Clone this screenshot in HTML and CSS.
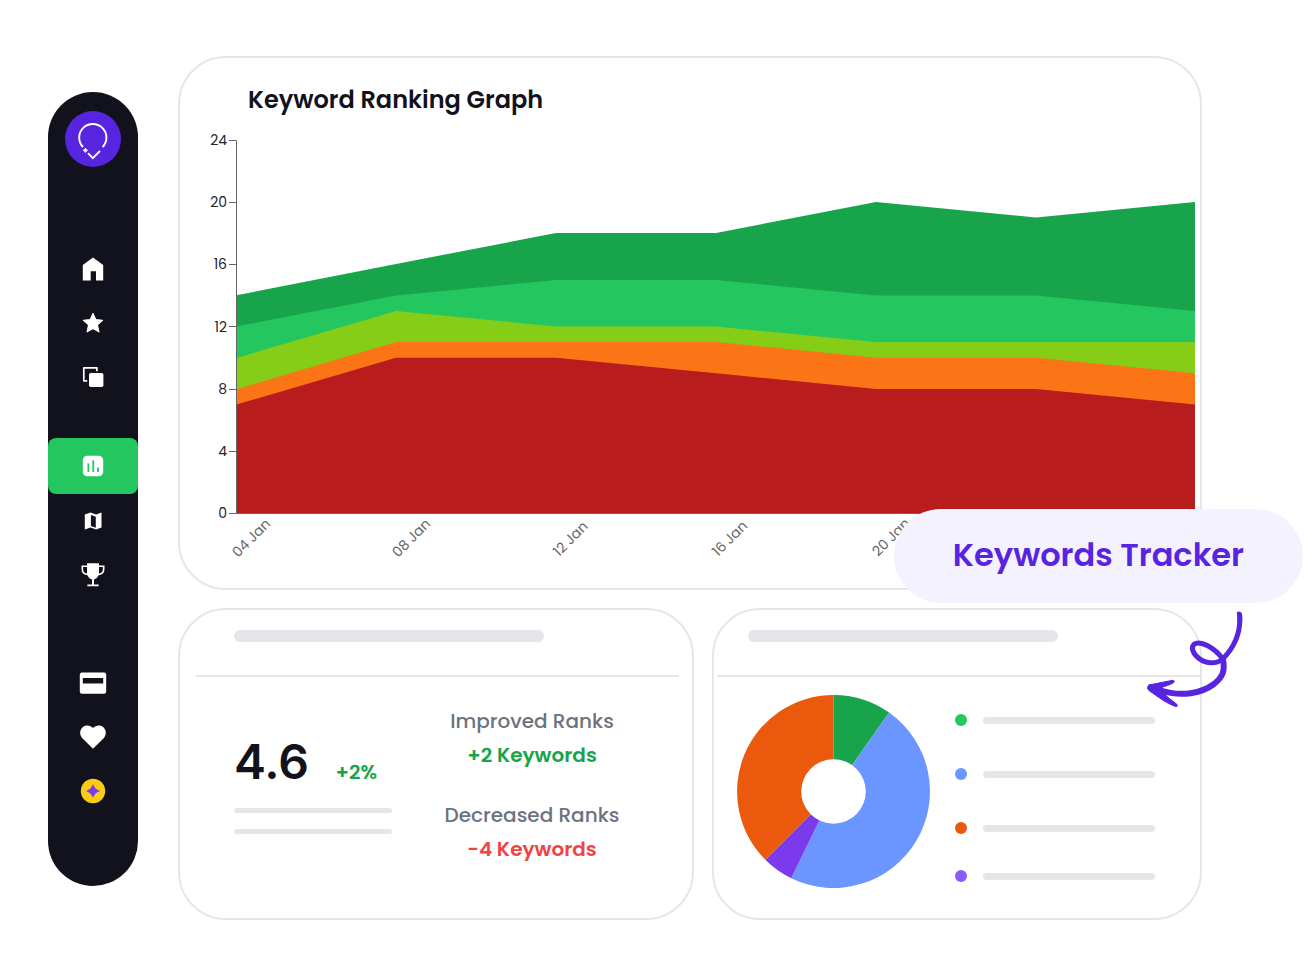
FILE: index.html
```html
<!DOCTYPE html>
<html lang="en">
<head>
<meta charset="utf-8">
<meta name="viewport" content="width=device-width, initial-scale=1">
<title>Keywords Tracker</title>
<link rel="stylesheet" href="styles.css">
</head>
<body>
<div class="page">
  <nav class="rail" aria-label="Main">
    <a class="logo" href="#" aria-label="Dashboard">
      <svg width="56" height="56" viewBox="0 0 56 56" fill="none" stroke="#fff" stroke-width="1.9">
        <path d="M18 36A13.6 13.6 0 1 1 37.6 36"/>
        <path d="M23 42.2L27.8 47.2L35 40"/>
        <path d="M20.4 37.2L21.2 38.5L22.5 39.3L21.2 40.1L20.4 41.4L19.6 40.1L18.3 39.3L19.6 38.5Z" fill="#fff" stroke-width="1"/>
      </svg>
    </a>
    <div class="rail-group">
      <a class="rail-link" href="#" aria-label="Home">
        <svg class="icon" viewBox="0 0 30 30"><path d="M15 3.5L25.2 11V26.5H18V17.2H12.7V26.5H4.8V11Z"/></svg>
      </a>
      <a class="rail-link" href="#" aria-label="Favourites">
        <svg class="icon" viewBox="0 0 30 30"><path d="M15 5.5L17.7 11.6L24.5 12.3L19.4 16.8L20.9 23.8L15 20.4L9.1 23.8L10.6 16.8L5.5 12.3L12.3 11.6Z" stroke="#fff" stroke-width="1.2" stroke-linejoin="round"/></svg>
      </a>
      <a class="rail-link" href="#" aria-label="Copies">
        <svg class="icon" viewBox="0 0 30 30"><rect x="11" y="11" width="14.4" height="14" rx="1.8"/><path d="M18.9 9.2V5.8H5.8V18.8H9.2" fill="none" stroke="#fff" stroke-width="1.7" stroke-linejoin="round"/></svg>
      </a>
    </div>
    <div class="rail-group rail-group-reports">
      <a class="rail-link rail-link-active" href="#" aria-label="Rankings" aria-current="page">
        <svg class="icon" viewBox="0 0 30 30"><rect x="4.8" y="4.8" width="20.4" height="20.4" rx="4.5"/><path d="M10.4 12.5V21M15.3 9.3V21M20 16.5V21" stroke="#24c65f" stroke-width="1.8"/></svg>
      </a>
      <a class="rail-link" href="#" aria-label="Map">
        <svg class="icon" viewBox="0 0 30 30"><path fill-rule="evenodd" d="M6.8 8.6L12.5 6.6L18.2 8.6L23.5 6.6V21.6L18.2 23.6L12.5 21.6L6.8 23.6ZM12.9 8.9V20L17.8 21.7V10.7Z"/></svg>
      </a>
      <a class="rail-link" href="#" aria-label="Achievements">
        <svg class="icon" viewBox="0 0 30 30"><path d="M9 3.3H21V12C21 16.3 18.8 18.8 16 19.4V24.4H20.6V26.2H9.4V24.4H14V19.4C11.2 18.8 9 16.3 9 12Z"/><path d="M9.5 6.3H4.3V9C4.3 12.3 6.5 14.3 10 14.5M20.5 6.3H25.7V9C25.7 12.3 23.5 14.3 20 14.5" fill="none" stroke="#fff" stroke-width="1.6"/></svg>
      </a>
    </div>
    <div class="rail-group rail-group-account">
      <a class="rail-link" href="#" aria-label="Billing">
        <svg class="icon" viewBox="0 0 30 30"><path fill-rule="evenodd" d="M4 4.5H26A2.2 2.2 0 0 1 28.2 6.7V23.6A2.2 2.2 0 0 1 26 25.8H4A2.2 2.2 0 0 1 1.8 23.6V6.7A2.2 2.2 0 0 1 4 4.5ZM4.8 10V15.4H25.2V10Z"/></svg>
      </a>
      <a class="rail-link" href="#" aria-label="Saved">
        <svg class="icon" viewBox="0 0 30 30"><path d="M15 26.8L4.6 16.4C1.4 13 1.4 8.2 4.4 5.4C7.4 2.6 12.3 2.8 15 6C17.7 2.8 22.6 2.6 25.6 5.4C28.6 8.2 28.6 13 25.4 16.4Z"/></svg>
      </a>
      <a class="rail-link" href="#" aria-label="Rewards">
        <svg class="icon" viewBox="0 0 30 30"><circle cx="15" cy="15" r="12.2" fill="#facc15"/><path d="M15 8C16.8 12.2 17.8 13.2 22 15C17.8 16.8 16.8 17.8 15 22C13.2 17.8 12.2 16.8 8 15C12.2 13.2 13.2 12.2 15 8Z" fill="#7c3aed"/></svg>
      </a>
    </div>
  </nav>

  <main class="board">
    <section class="card chart-card">
      <h1 class="chart-title">Keyword Ranking Graph</h1>
      <svg class="chart" viewBox="0 0 1020 440" role="img" aria-label="Stacked keyword rankings by date">
        <path fill="#18a44b" d="M56.5 165.2L216 134L376 103L536 103L696 72L856 87.5L1015 72V383.5H56.5Z"/>
        <path fill="#24c65f" d="M56.5 196.5L216 165.4L376 150L536 150L696 165.4L856 165.4L1015 181V383.5H56.5Z"/>
        <path fill="#86cd18" d="M56.5 228L216 181L376 196.6L536 196.6L696 212L856 212L1015 212V383.5H56.5Z"/>
        <path fill="#fb7415" d="M56.5 259.2L216 212L376 212L536 212L696 227.8L856 227.8L1015 243.3V383.5H56.5Z"/>
        <path fill="#b91c1c" d="M56.5 274.5L216 227.8L376 227.8L536 243.3L696 259L856 259L1015 274.5V383.5H56.5Z"/>
        <path class="axis" d="M1015 383.5H56.5V10.5M49 10.5H56.5M49 72.5H56.5M49 134.5H56.5M49 196.5H56.5M49 259.5H56.5M49 321.5H56.5M49 383.5H56.5"/>
        <g class="tick-y">
          <text x="47" y="15">24</text>
          <text x="47" y="77">20</text>
          <text x="47" y="139">16</text>
          <text x="47" y="202">12</text>
          <text x="47" y="264">8</text>
          <text x="47" y="326">4</text>
          <text x="47" y="388">0</text>
        </g>
        <g class="tick-x">
          <text transform="translate(58 428) rotate(-45)">04 Jan</text>
          <text transform="translate(218 428) rotate(-45)">08 Jan</text>
          <text transform="translate(379 427) rotate(-45)">12 Jan</text>
          <text transform="translate(538 427) rotate(-45)">16 Jan</text>
          <text transform="translate(698 427) rotate(-45)">20 Jan</text>
        </g>
      </svg>
      <p class="callout">Keywords Tracker</p>
    </section>

    <div class="cards">
      <section class="card" aria-label="Rank changes">
        <div class="card-head"><span class="bar bar-title"></span></div>
        <div class="stats">
          <div class="score">
            <p class="score-row"><strong class="score-value">4.6</strong><span class="score-delta">+2%</span></p>
            <span class="bar bar-thin"></span>
            <span class="bar bar-thin"></span>
          </div>
          <dl class="ranks">
            <div>
              <dt>Improved Ranks</dt>
              <dd class="up">+2 Keywords</dd>
            </div>
            <div>
              <dt>Decreased Ranks</dt>
              <dd class="down">-4 Keywords</dd>
            </div>
          </dl>
        </div>
      </section>

      <section class="card share-card" aria-label="Share">
        <div class="card-head card-head-wide"><span class="bar bar-title"></span></div>
        <div class="share">
          <svg class="donut" viewBox="-96.5 -96.5 193 193" role="img" aria-label="Share by group">
            <path fill="#18a44b" d="M0 0V-96.5A96.5 96.5 0 0 1 55.6 -78.9Z"/>
            <path fill="#6b95ff" d="M0 0L55.6 -78.9A96.5 96.5 0 0 1 -42.3 86.7Z"/>
            <path fill="#7c3aed" d="M0 0L-42.3 86.7A96.5 96.5 0 0 1 -68.2 68.2Z"/>
            <path fill="#ea590c" d="M0 0L-68.2 68.2A96.5 96.5 0 0 1 0 -96.5Z"/>
            <path d="M0 0L-92.1 28.8" stroke="#f17a3b" stroke-width="0.5" stroke-dasharray="2 2"/>
            <circle r="32.3" fill="#fff"/>
          </svg>
          <ul class="legend">
            <li><span class="dot dot-green"></span><span class="bar bar-legend"></span></li>
            <li><span class="dot dot-blue"></span><span class="bar bar-legend"></span></li>
            <li><span class="dot dot-orange"></span><span class="bar bar-legend"></span></li>
            <li><span class="dot dot-violet"></span><span class="bar bar-legend"></span></li>
          </ul>
        </div>
        <svg class="arrow" viewBox="0 0 100 100" width="100" height="100" fill="none" stroke="#5724e0" stroke-linecap="round" stroke-linejoin="round" aria-hidden="true">
          <path stroke-width="5" d="M95.6 7C97 24 90 39 79.5 50.2C73 56.5 62 56 55 50.5C49 45.8 46.5 39.5 50 36.3C56 32 71 39.5 79 51.5"/>
          <path stroke-width="6" d="M79 51.5C81 62 79.5 68.5 70 76C58 85 38 89.5 15 82"/>
          <path fill="#5724e0" stroke="none" d="M92.8 4.6C93.8 2.7 97.6 3.3 98 6.5L98.3 14H93.8Z"/>
          <path fill="#5724e0" stroke-width="1" d="M5 77L28 72.4C30.5 72 31 73.5 29.500 74.800C26 77 21 78 17 79.8L19 84L23 88.5C27 92 31 94.5 33 96.500C34 98 33 99 31 98.300C23 95.500 14 89 5 82.500C3 81 3 78.5 5 77Z"/>
        </svg>
      </section>
    </div>
  </main>
</div>
</body>
</html>
```
FILE: styles.css
```css
* {
  box-sizing: border-box;
}

body {
  margin: 0;
  background: #fff;
  color: #12121c;
  font-family: Poppins, Inter, "Liberation Sans", sans-serif;
  overflow-x: hidden;
}

h1, p, dl, dd, ul {
  margin: 0;
  padding: 0;
}

.page {
  display: flex;
  gap: 40px;
  padding: 56px 112px 58px 48px;
}

.rail {
  flex: none;
  display: flex;
  flex-direction: column;
  width: 90px;
  margin: 36px 0 34px;
  padding: 19px 0 67px;
  border-radius: 45px;
  background: #12121c;
}

.logo {
  align-self: center;
  display: flex;
  margin-bottom: 75px;
  border-radius: 50%;
  background: #5724e0;
}

.rail-group {
  display: flex;
  flex-direction: column;
}

.rail-group-reports {
  margin-top: 34px;
}

.rail-group-account {
  margin-top: 54px;
}

.rail-link {
  display: flex;
  align-items: center;
  justify-content: center;
  height: 54px;
}

.rail-link-active {
  height: 56px;
  border-radius: 8px;
  background: #24c65f;
}

.icon {
  width: 30px;
  height: 30px;
  fill: #fff;
}

.board {
  flex: 1;
  min-width: 0;
  display: flex;
  flex-direction: column;
  gap: 18px;
}

.card {
  position: relative;
  border: 2px solid #e5e6ea;
  border-radius: 48px;
}

.chart-card {
  z-index: 1;
  padding: 24px 0 18px;
}

.chart-title {
  margin: 0 68px 12px;
  font-size: 24px;
  font-weight: 600;
  line-height: 36px;
}

.chart {
  display: block;
  width: 100%;
}

.axis {
  fill: none;
  stroke: #666;
  stroke-width: 1;
}

.tick-y {
  fill: #23232d;
  font-size: 14px;
  text-anchor: end;
}

.tick-x {
  fill: #666;
  font-size: 14px;
}

.callout {
  position: absolute;
  right: -103px;
  bottom: -15px;
  padding: 23px 59px 25px;
  border-radius: 47px;
  background: #f4f2ff;
  color: #5724e0;
  font-size: 32px;
  font-weight: 600;
  line-height: 46px;
  white-space: nowrap;
}

.cards {
  display: grid;
  grid-template-columns: 516fr 490fr;
  gap: 18px;
}

.card-head {
  margin: 0 13px 0 16px;
  padding: 20px 38px 33px;
  border-bottom: 2px solid #e5e6ea;
}

.card-head-wide {
  margin: 0 0 0 3px;
  padding: 20px 31px 33px;
}

.bar {
  display: block;
  border-radius: 6px;
  background: #e5e6ea;
}

.bar-title {
  max-width: 310px;
  height: 12px;
}

.bar-thin {
  height: 5px;
}

.bar-legend {
  flex: 1;
  max-width: 172px;
  height: 7px;
}

.stats {
  display: flex;
  gap: 52px;
  padding: 27px 54px 50px;
}

.score {
  display: flex;
  flex-direction: column;
  gap: 16px;
  width: 158px;
  padding-top: 28px;
}

.score-row {
  display: flex;
  align-items: baseline;
  justify-content: space-between;
  padding-right: 15px;
}

.score-value {
  font-family: Inter, "Liberation Sans", sans-serif;
  font-size: 48px;
  font-weight: 600;
  line-height: 60px;
}

.score-delta {
  color: #18a44b;
  font-size: 20px;
  font-weight: 600;
  line-height: 24px;
}

.ranks {
  display: flex;
  flex-direction: column;
  gap: 26px;
  width: 176px;
  text-align: center;
  white-space: nowrap;
  font-size: 20px;
}

.ranks dt {
  color: #6b7280;
  font-weight: 500;
  line-height: 34px;
}

.ranks dd {
  font-weight: 600;
  line-height: 34px;
}

.up {
  color: #18a44b;
}

.down {
  color: #ef4444;
}

.share {
  display: flex;
  gap: 25px;
  padding: 16px 45px 21px 23px;
}

.donut {
  flex: none;
  width: 193px;
  height: 193px;
  margin-top: 2px;
}

.legend {
  flex: 1;
  display: grid;
  grid-template-rows: 54px 54px 54px 42px;
  list-style: none;
}

.legend li {
  display: flex;
  align-items: center;
  gap: 16px;
}

.dot {
  width: 12px;
  height: 12px;
  border-radius: 50%;
}

.dot-green {
  background: #24c65f;
}

.dot-blue {
  background: #6b95ff;
}

.dot-orange {
  background: #ea590c;
}

.dot-violet {
  background: #8b5cf6;
}

.arrow {
  position: absolute;
  top: -2px;
  right: -44px;
}
```
